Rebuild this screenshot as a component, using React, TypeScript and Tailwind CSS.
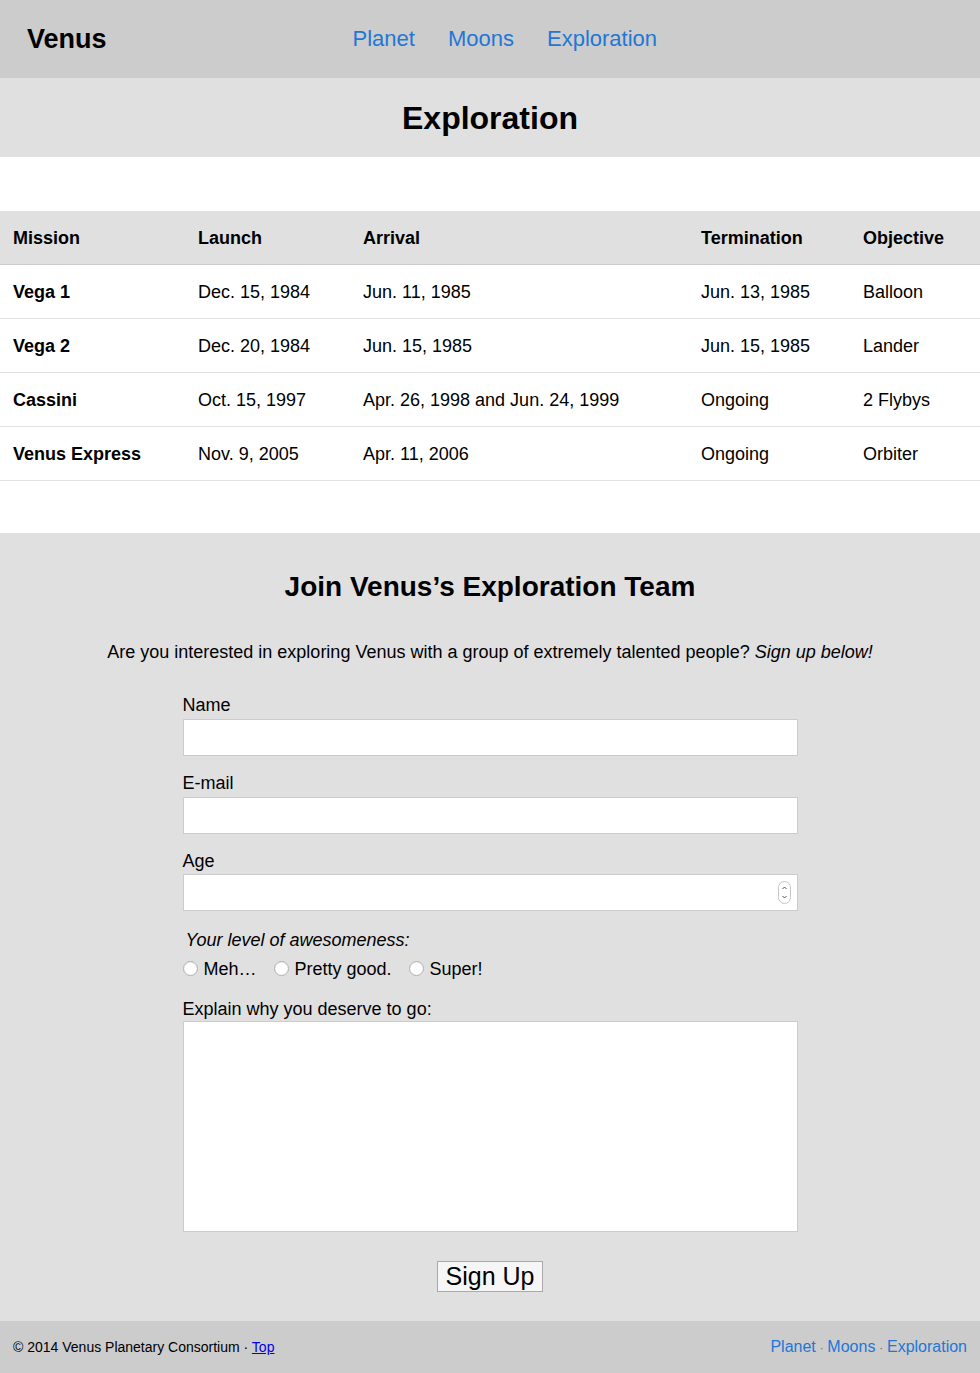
import React from "react";

const font = { fontFamily: '"Liberation Sans", Arial, Helvetica, sans-serif' };

const missions = [
  { name: "Vega 1", launch: "Dec. 15, 1984", arrival: "Jun. 11, 1985", end: "Jun. 13, 1985", goal: "Balloon" },
  { name: "Vega 2", launch: "Dec. 20, 1984", arrival: "Jun. 15, 1985", end: "Jun. 15, 1985", goal: "Lander" },
  { name: "Cassini", launch: "Oct. 15, 1997", arrival: "Apr. 26, 1998 and Jun. 24, 1999", end: "Ongoing", goal: "2 Flybys" },
  { name: "Venus Express", launch: "Nov. 9, 2005", arrival: "Apr. 11, 2006", end: "Ongoing", goal: "Orbiter" },
];

function Radio({ label }: { label: string }) {
  return (
    <label className="flex items-center">
      <span className="w-[15px] h-[15px] rounded-full border border-[#b0b0b0] bg-white shadow-[inset_0_1px_1px_rgba(0,0,0,0.08)]" />
      <span className="ml-[6px]">{label}</span>
    </label>
  );
}

export default function App() {
  return (
    <div style={font} className="w-[980px] text-black bg-white">
      <header className="h-[78px] bg-[#cccccc] flex items-center">
        <div className="ml-[27px] text-[27px] font-bold">Venus</div>
        <nav className="ml-[246px] flex gap-[33px] text-[22px] text-[#2277d6] -mt-[2px]">
          <a>Planet</a>
          <a>Moons</a>
          <a>Exploration</a>
        </nav>
      </header>

      <div className="h-[79px] bg-[#e0e0e0] flex items-center justify-center">
        <h1 className="text-[32px] font-bold">Exploration</h1>
      </div>

      <div className="pt-[54px] pb-[52px]">
        <table className="w-full border-collapse table-fixed text-[18px]">
          <colgroup>
            <col className="w-[185px]" />
            <col className="w-[165px]" />
            <col className="w-[338px]" />
            <col className="w-[162px]" />
            <col />
          </colgroup>
          <thead>
            <tr className="h-[53px] bg-[#e0e0e0] border-b border-[#cccccc]">
              {["Mission", "Launch", "Arrival", "Termination", "Objective"].map((h) => (
                <th key={h} className="text-left font-bold pl-[13px] pt-[2px]">{h}</th>
              ))}
            </tr>
          </thead>
          <tbody>
            {missions.map((m) => (
              <tr key={m.name} className="h-[54px] border-b border-[#e2e2e2]">
                <td className="pl-[13px] pt-[2px] font-bold">{m.name}</td>
                <td className="pl-[13px] pt-[2px]">{m.launch}</td>
                <td className="pl-[13px] pt-[2px]">{m.arrival}</td>
                <td className="pl-[13px] pt-[2px]">{m.end}</td>
                <td className="pl-[13px] pt-[2px]">{m.goal}</td>
              </tr>
            ))}
          </tbody>
        </table>
      </div>

      <section className="bg-[#e0e0e0] pt-[38px] pb-[29px]">
        <h2 className="text-center text-[28px] leading-[32px] font-bold">Join Venus’s Exploration Team</h2>
        <p className="mt-[38px] text-center text-[18px] leading-[22px]">
          Are you interested in exploring Venus with a group of extremely talented people? <em>Sign up below!</em>
        </p>

        <form className="w-[615px] mx-auto mt-[31px] text-[18px] leading-[22px]">
          <label className="block">Name</label>
          <input className="block mt-[3px] w-full h-[37px] bg-white border border-[#cccccc] outline-none" />

          <label className="block mt-[16px]">E-mail</label>
          <input className="block mt-[3px] w-full h-[37px] bg-white border border-[#cccccc] outline-none" />

          <label className="block mt-[16px]">Age</label>
          <div className="relative mt-[2px]">
            <input className="block w-full h-[37px] bg-white border border-[#cccccc] outline-none" />
            <svg className="absolute right-[7px] top-[7px]" width="13" height="23" viewBox="0 0 13 23">
              <rect x="0.5" y="0.5" width="12" height="22" rx="6" fill="#fff" stroke="#c4c4c4" />
              <path d="M4.5 8 L6.5 6 L8.5 8" fill="none" stroke="#555" strokeWidth="1" />
              <path d="M4.5 15 L6.5 17 L8.5 15" fill="none" stroke="#555" strokeWidth="1" />
            </svg>
          </div>

          <div className="mt-[18px] ml-[3px] italic">Your level of awesomeness:</div>
          <div className="mt-[7px] flex gap-[17px]">
            <Radio label="Meh…" />
            <Radio label="Pretty good." />
            <Radio label="Super!" />
          </div>

          <label className="block mt-[18px]">Explain why you deserve to go:</label>
          <textarea className="block mt-[1px] w-full h-[211px] bg-white border border-[#cccccc] outline-none resize-none" />

          <div className="mt-[29px] flex justify-center">
            <button type="button" className="w-[106px] h-[31px] bg-[#f6f6f6] border border-[#a9a9a9] text-[25px] leading-none">
              Sign Up
            </button>
          </div>
        </form>
      </section>

      <footer className="h-[53px] bg-[#cccccc] flex items-center justify-between px-[13px]">
        <div className="text-[14px]">
          © 2014 Venus Planetary Consortium · <a className="text-[#0000ee] underline">Top</a>
        </div>
        <div className="text-[16px] text-[#2277d6]">
          Planet<span className="text-[13px] text-[#777]"> · </span>Moons<span className="text-[13px] text-[#777]"> · </span>Exploration
        </div>
      </footer>
    </div>
  );
}
